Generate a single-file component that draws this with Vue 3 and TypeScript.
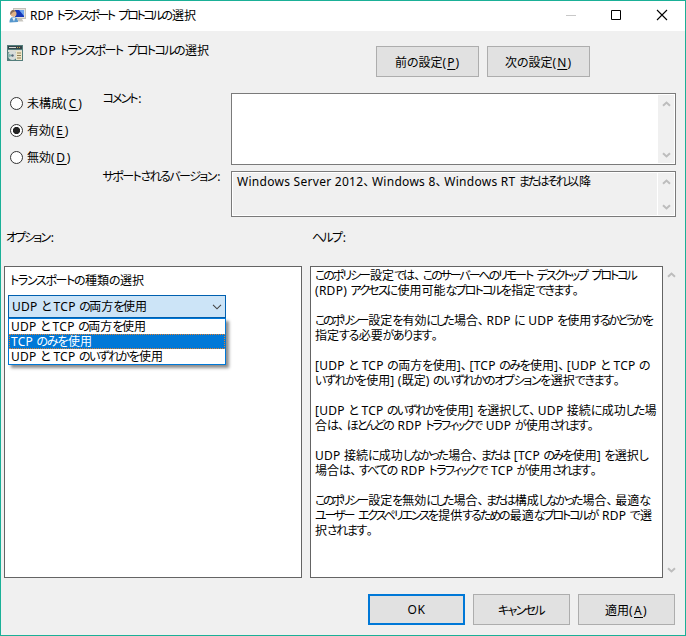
<script setup lang="ts">
import { defineComponent, h, nextTick, onMounted, ref } from 'vue'

type Run = { text: string; kind: string }

function splitRuns(source: string): Run[] {
  const runs: Run[] = []
  let underline = false
  for (const ch of source) {
    if (ch === '&') {
      underline = true
      continue
    }
    let base = 'kanji'
    if (ch === ':') base = 'colon'
    else if (/[\u3001\u3002]/.test(ch)) base = 'mark'
    else if (/[\u3003-\u30ff]/.test(ch)) base = 'kana'
    else if (/[\u0020-\u007e]/.test(ch)) base = 'latin'
    const kind = underline ? 'latin key' : base
    underline = false
    const last = runs[runs.length - 1]
    if (last && last.kind === kind) last.text += ch
    else runs.push({ text: ch, kind })
  }
  return runs
}

/* Caption text: kana are set proportionally so that the line takes the given width. */
const Caption = defineComponent({
  props: { text: { type: String, required: true }, w: { type: Number, required: true } },
  setup(props) {
    const el = ref<HTMLElement | null>(null)
    onMounted(async () => {
      await nextTick()
      await document.fonts.ready
      const node = el.value
      if (!node) return
      const missing = props.w - node.getBoundingClientRect().width
      const kana = Array.from(node.querySelectorAll<HTMLElement>('.kana'))
      const letters = kana.reduce((n, t) => n + (t.textContent ?? '').length, 0)
      if (letters < 2) {
        const latin = Array.from(node.querySelectorAll<HTMLElement>('.latin'))
        const count = latin.reduce((n, t) => n + (t.textContent ?? '').length, 0)
        latin.forEach((t) => {
          const own = parseFloat(getComputedStyle(t).letterSpacing) || 0
          t.style.letterSpacing = (own + missing / count).toFixed(3) + 'px'
        })
        return
      }
      const gap = missing / (letters - kana.length * 0.6)
      kana.forEach((t) => {
        t.style.letterSpacing = gap.toFixed(3) + 'px'
        t.style.marginRight = (-gap * 0.6).toFixed(3) + 'px'
      })
    })
    return () =>
      h('span', { class: 'caption', ref: el }, splitRuns(props.text).map((r) => h('span', { class: r.kind }, r.text)))
  },
})

const states = [
  { text: '未構成(&C)', w: 57, on: false },
  { text: '有効(&E)', w: 43, on: true },
  { text: '無効(&D)', w: 45, on: false },
]

const choices = [
  { text: 'UDP と TCP の両方を使用', w: 135, on: false },
  { text: 'TCP のみを使用', w: 81, on: true },
  { text: 'UDP と TCP のいずれかを使用', w: 152, on: false },
]

const help = [
  [
    { text: 'このポリシー設定では、このサーバーへのリモート デスクトップ プロトコル', w: 322 },
    { text: '(RDP) アクセスに使用可能なプロトコルを指定できます。', w: 265 },
  ],
  [
    { text: 'このポリシー設定を有効にした場合、RDP に UDP を使用するかどうかを', w: 338 },
    { text: '指定する必要があります。', w: 124 },
  ],
  [
    { text: '[UDP と TCP の両方を使用]、[TCP のみを使用]、[UDP と TCP の', w: 335 },
    { text: 'いずれかを使用] (既定) のいずれかのオプションを選択できます。', w: 306 },
  ],
  [
    { text: '[UDP と TCP のいずれかを使用] を選択して、UDP 接続に成功した場', w: 341 },
    { text: '合は、ほとんどの RDP トラフィックで UDP が使用されます。', w: 280 },
  ],
  [
    { text: 'UDP 接続に成功しなかった場合、または [TCP のみを使用] を選択し', w: 333 },
    { text: '場合は、すべての RDP トラフィックで TCP が使用されます。', w: 283 },
  ],
  [
    { text: 'このポリシー設定を無効にした場合、または構成しなかった場合、最適な', w: 335 },
    { text: 'ユーザー エクスペリエンスを提供するための最適なプロトコルが RDP で選', w: 337 },
    { text: '択されます。', w: 59 },
  ],
]
</script>

<template>
  <div class="window">
    <header class="titlebar">
      <svg class="app-icon" width="17" height="16" viewBox="0 0 17 16">
        <rect x="4.500" y="0.500" width="12" height="10" fill="#e4e2dc" stroke="#c4c2bb" />
        <rect x="6" y="2" width="9" height="7" fill="#1638b8" />
        <path d="M10 2h5v6z" fill="#6fa5ef" />
        <path d="M9 11h4l1.500 2.500H8z" fill="#c7c5bf" />
        <path d="M0.500 14.500c0-4 1.500-5.500 4-5.500s4.500 1.500 4.500 5z" fill="#5596cc" />
        <path d="M3 9.500l2 4 1.500-4z" fill="#e9f2f8" />
        <circle cx="4.500" cy="5.800" r="3" fill="#e2b386" />
        <path d="M1.300 7C0.500 2.500 4 .8 7 3L3.500 4.500z" fill="#8b6f5a" />
      </svg>
      <h1><Caption text="RDP トランスポート プロトコルの選択" :w="166" class="tight" /></h1>
      <div class="controls">
        <svg width="46" height="30" viewBox="0 0 46 30"><path d="M18 14.500h10" stroke="#c8c8c8" /></svg>
        <svg width="46" height="30" viewBox="0 0 46 30"><path d="M17.500 9.500h9v9h-9z" fill="none" stroke="#000" /></svg>
        <svg width="46" height="30" viewBox="0 0 46 30"><path d="M17 9l10 10M27 9l-10 10" stroke="#000" stroke-width="1.100" /></svg>
      </div>
    </header>

    <section class="heading">
      <svg class="policy-icon" width="16" height="16" viewBox="0 0 16 16">
        <path d="M0 0h16v16H0z" fill="#537d7b" />
        <path d="M1 1h14v3H1z" fill="#334449" />
        <path d="M2 2h7v1H2z" fill="#d5d9d4" />
        <path d="M10 2h1v1h-1zM12 2h1v1h-1z" fill="#c5a957" />
        <path d="M1 5h14v2H1z" fill="#dcddd4" />
        <circle cx="5.500" cy="10.500" r="4.500" fill="#d7dcda" />
        <path d="M5.500 10.500L1.500 8.500a4.500 4.500 0 0 0 0 4z" fill="#85b4ad" />
        <circle cx="5.500" cy="10.500" r="1.200" fill="#567" />
        <path d="M9 6h6v9H9z" fill="#eee6c9" />
        <path d="M10 8h4M10 10.500h4M10 13h4" stroke="#907e54" />
      </svg>
      <h2><Caption text="RDP トランスポート プロトコルの選択" :w="178" class="wide" /></h2>
      <button class="btn nav"><Caption text="前の設定(&P)" :w="65" /></button>
      <button class="btn nav"><Caption text="次の設定(&N)" :w="67" /></button>
    </section>

    <section class="settings">
      <div class="states">
        <label v-for="s in states" :key="s.text" class="state">
          <i class="radio" :class="{ on: s.on }"></i><Caption :text="s.text" :w="s.w" />
        </label>
      </div>
      <div class="names">
        <div class="name comment"><Caption text="コメント:" :w="39" /></div>
        <div class="name"><Caption text="サポートされるバージョン:" :w="118" /></div>
      </div>
      <div class="fields">
        <div class="field comment-field">
          <div class="value"></div>
          <div class="scroll">
            <svg width="9" height="6" viewBox="0 0 9 6"><path d="M1 4.800L4.500 1.500 8 4.800" /></svg>
            <svg width="9" height="6" viewBox="0 0 9 6"><path d="M1 1.200L4.500 4.500 8 1.200" /></svg>
          </div>
        </div>
        <div class="field version-field">
          <div class="value"><Caption text="Windows Server 2012、Windows 8、Windows RT またはそれ以降" :w="354" /></div>
          <div class="scroll">
            <svg width="9" height="6" viewBox="0 0 9 6"><path d="M1 4.800L4.500 1.500 8 4.800" /></svg>
            <svg width="9" height="6" viewBox="0 0 9 6"><path d="M1 1.200L4.500 4.500 8 1.200" /></svg>
          </div>
        </div>
      </div>
    </section>

    <section class="labels">
      <div><Caption text="オプション:" :w="48" /></div>
      <div><Caption text="ヘルプ:" :w="34" /></div>
    </section>

    <section class="panels">
      <div class="panel options">
        <div class="option-name"><Caption text="トランスポートの種類の選択" :w="134" /></div>
        <div class="combo">
          <Caption text="UDP と TCP の両方を使用" :w="135" />
          <svg width="10" height="6" viewBox="0 0 10 6"><path d="M1 0.800L5 4.800 9 0.800" fill="none" stroke="#444" stroke-width="1.100" /></svg>
          <ul class="list">
            <li v-for="c in choices" :key="c.text" :class="{ on: c.on }"><Caption :text="c.text" :w="c.w" /></li>
          </ul>
        </div>
      </div>
      <div class="panel help">
        <div v-for="(p, i) in help" :key="i" class="para">
          <div v-for="line in p" :key="line.text" class="line"><Caption :text="line.text" :w="line.w" /></div>
        </div>
      </div>
      <div class="scroll outer">
        <svg width="9" height="6" viewBox="0 0 9 6"><path d="M1 4.800L4.500 1.500 8 4.800" /></svg>
        <svg width="9" height="6" viewBox="0 0 9 6"><path d="M1 1.200L4.500 4.500 8 1.200" /></svg>
      </div>
    </section>

    <footer class="footer">
      <button class="btn primary"><Caption text="OK" :w="18" /></button>
      <button class="btn"><Caption text="キャンセル" :w="47" /></button>
      <button class="btn"><Caption text="適用(&A)" :w="43" /></button>
    </footer>
  </div>
</template>

<style>
body {
  margin: 0;
  overflow: hidden;
}
.caption {
  display: inline-block;
  flex: none;
  white-space: pre;
  font-family: "Noto Sans", "Noto Sans CJK JP", sans-serif;
  font-size: 12px;
  line-height: 13px;
  padding-bottom: 2px;
}
.btn .caption {
  line-height: 15px;
  padding-bottom: 0;
}
.caption .kana,
.caption .mark {
  font-family: "Noto Sans CJK JP", sans-serif;
  font-feature-settings: "palt";
}
.caption .mark {
  padding-right: 2.5px;
}
.caption .colon {
  padding-left: 0.5px;
}
.caption .latin {
  letter-spacing: 0.28px;
}
.caption .kanji {
  font-family: "Noto Sans CJK JP", sans-serif;
}
.caption .key {
  text-decoration: underline;
  text-underline-offset: 2px;
  text-decoration-skip-ink: none;
}
.caption.wide .latin {
  letter-spacing: 0.6px;
}
.caption.tight .latin {
  letter-spacing: 0;
}
</style>

<style scoped>
.window {
  box-sizing: border-box;
  width: 686px;
  height: 636px;
  display: flex;
  flex-direction: column;
  border: 1px solid #1ab097;
  background: #f0f0f0;
  color: #000;
}
.titlebar {
  height: 30px;
  flex: none;
  display: flex;
  align-items: center;
  background: #fff;
}
.app-icon {
  margin: 0 4px 0 8px;
}
h1,
h2 {
  margin: 0;
  font-weight: normal;
  line-height: 15px;
  display: flex;
}
.controls {
  margin-left: auto;
  margin-right: -1px;
  display: flex;
}
.heading {
  height: 62px;
  flex: none;
  display: flex;
  align-items: flex-start;
  padding-top: 15px;
  box-sizing: border-box;
}
.policy-icon {
  margin: -1px 8px 0 6px;
}
.heading h2 {
  width: 345px;
  margin-top: -3px;
}
.btn {
  box-sizing: border-box;
  width: 97px;
  height: 31px;
  display: flex;
  align-items: center;
  justify-content: center;
  margin: 0;
  padding: 0;
  border: 1px solid #adadad;
  border-radius: 0;
  background: #e1e1e1;
  color: #000;
}
.btn.nav {
  width: 103px;
  margin-right: 8px;
}
.btn.primary {
  border: 2px solid #0078d7;
}
.settings {
  height: 124px;
  flex: none;
  display: grid;
  grid-template-columns: 92px 129px 445px;
  padding-left: 9px;
}
.states {
  display: flex;
  flex-direction: column;
  gap: 12px;
  padding-top: 3px;
}
.state {
  display: flex;
  align-items: center;
  gap: 4px;
  height: 15px;
}
.radio {
  box-sizing: border-box;
  width: 13px;
  height: 13px;
  border: 1px solid #333;
  border-radius: 50%;
  background: #fff;
}
.radio.on {
  background: radial-gradient(circle, #222 3.300px, #fff 3.900px);
}
.name {
  line-height: 15px;
  display: flex;
  padding-left: 0.5px;
}
.name.comment {
  height: 78px;
  margin-top: -2px;
}
.fields {
  display: flex;
  flex-direction: column;
  gap: 6px;
}
.field {
  box-sizing: border-box;
  display: flex;
  border: 1px solid #7a7a7a;
  padding: 1px;
  background: #fff;
}
.comment-field {
  height: 72px;
}
.version-field {
  height: 46px;
}
.value {
  flex: 1;
  display: flex;
  padding: 1px 0 0 4px;
}
.version-field .value {
  background: #f0f0f0;
  margin-right: 1px;
}
.scroll {
  width: 16px;
  display: flex;
  flex-direction: column;
  justify-content: space-between;
  align-items: center;
  padding: 6px 0 5px;
  box-sizing: border-box;
  background: #f0f0f0;
}
.scroll path {
  fill: none;
  stroke: #bdbdbd;
  stroke-width: 2;
}
.labels {
  height: 49px;
  flex: none;
  display: grid;
  grid-template-columns: 306px 1fr;
  padding: 13px 0 0 5px;
  box-sizing: border-box;
}
.labels > div {
  display: flex;
}
.panels {
  height: 312px;
  flex: none;
  display: grid;
  grid-template-columns: 298px 8px 353px 16px;
  padding-left: 3px;
}
.panel {
  box-sizing: border-box;
  border: 1px solid #646464;
  background: #fff;
}
.options {
  grid-column: 1;
  padding: 6px 3px;
}
.help {
  grid-column: 3;
  padding: 1px 0 0 4px;
}
.outer {
  grid-column: 4;
}
.option-name {
  display: flex;
  padding-left: 2px;
  height: 22px;
}
.combo {
  position: relative;
  box-sizing: border-box;
  width: 218px;
  height: 23px;
  display: flex;
  align-items: center;
  justify-content: space-between;
  padding: 0 3px;
  border: 1px solid #0060b0;
  background: #cce4f7;
}
.list {
  position: absolute;
  left: -1px;
  top: 22px;
  width: 216px;
  margin: 0;
  padding: 0;
  list-style: none;
  border: 1px solid #0078d7;
  background: #fff;
  box-shadow: 3px 3px 3px rgba(0, 0, 0, 0.45);
}
.list li {
  display: flex;
  height: 15px;
  box-sizing: border-box;
  padding-left: 2px;
}
.list li.on {
  background: #0078d7;
  color: #fff;
  outline: 1px dotted #e08030;
  outline-offset: -1px;
}
.para {
  margin-bottom: 15px;
}
.line {
  height: 15px;
  display: flex;
}
.footer {
  display: flex;
  justify-content: flex-end;
  gap: 8px;
  padding: 16px 10px 0 0;
}
</style>
